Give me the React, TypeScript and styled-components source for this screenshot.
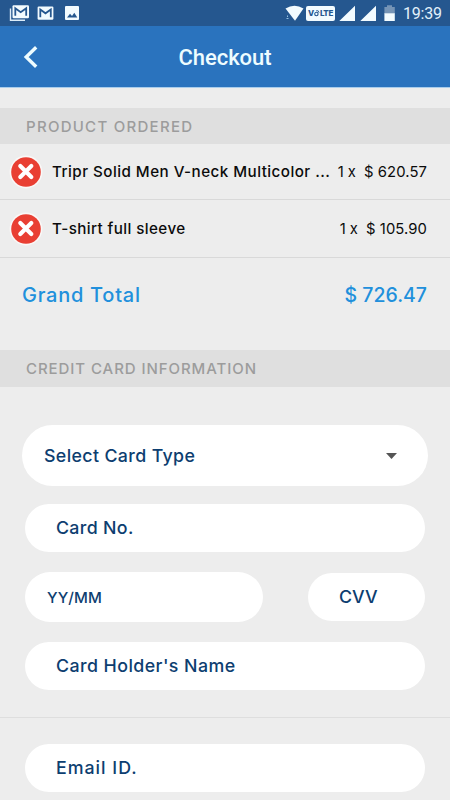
import React from 'react';
import styled, { createGlobalStyle } from 'styled-components';

const GlobalStyle = createGlobalStyle`
  * { box-sizing: border-box; }
  html, body { margin: 0; padding: 0; background: #ededed; }
  body { overflow: hidden; font-family: Inter, "Liberation Sans", sans-serif; }
`;

const Screen = styled.div`
  display: flex;
  flex-direction: column;
  width: 450px;
  height: 800px;
  overflow: hidden;
  background: #ededed;
`;

const StatusBar = styled.div`
  display: flex;
  flex: none;
  height: 26px;
  justify-content: space-between;
  background: #25578f;
`;

const Clock = styled.span`
  width: 55px;
  padding-left: 8px;
  font: 400 16px/28px Roboto, sans-serif;
  letter-spacing: -0.2px;
  color: #e2f1fb;
`;

const StatusGroup = styled.div`
  display: flex;
`;

const Header = styled.header`
  display: grid;
  flex: none;
  grid-template-columns: 60px 1fr 60px;
  height: 62px;
  background: #2a73be;
  border-bottom: 1px solid #a9cdec;
`;

const BackButton = styled.button`
  padding: 0;
  border: 0;
  background: none;
  display: flex;
`;

const Title = styled.h1`
  margin: 0;
  text-align: center;
  font: 500 22px/63px Roboto, sans-serif;
  letter-spacing: -0.05px;
  color: #eefcff;
`;

const SectionHeading = styled.h2<{ $gap: number; $height: number; $spacing: number }>`
  flex: none;
  height: ${(p) => p.$height}px;
  margin: ${(p) => p.$gap}px 0 0;
  padding-left: 26px;
  background: #dfdfdf;
  color: #9c9c9c;
  font-size: 15px;
  font-weight: 500;
  line-height: 38px;
  letter-spacing: ${(p) => p.$spacing}px;
`;

const ItemRow = styled.div<{ $height: number }>`
  display: flex;
  flex: none;
  align-items: center;
  height: ${(p) => p.$height}px;
  padding: 0 23px 0 9px;
  border-bottom: 1px solid #d9d9d9;
  color: #0b0b0b;
  font-size: 14.8px;
  white-space: pre;
`;

const RemoveButton = styled.button`
  display: flex;
  padding: 0;
  border: 0;
  background: none;
`;

const ItemName = styled.span<{ $spacing: number }>`
  flex: 1;
  margin-left: 9px;
  font-size: 15.2px;
  font-weight: 500;
  letter-spacing: ${(p) => p.$spacing}px;
`;

const Quantity = styled.span`
  margin-right: 8px;
`;

const Price = styled.span`
  letter-spacing: 0.1px;
`;

const TotalRow = styled.div`
  display: flex;
  flex: none;
  justify-content: space-between;
  height: 92px;
  padding: 18px 23px 0 22px;
  color: #2190dc;
  font-size: 19.5px;
  font-weight: 500;
  line-height: 39px;
`;

const TotalLabel = styled.span`
  font-size: 20px;
  letter-spacing: 0.74px;
`;

const Fields = styled.div`
  display: flex;
  flex-direction: column;
  flex: none;
  padding: 38px 25px 27px;
`;

const FieldPair = styled.div`
  display: flex;
  align-items: center;
  justify-content: space-between;
  margin: 20px 0;
`;

const Field = styled.div<{ $spacing: number }>`
  height: 48px;
  padding-left: 31px;
  border-radius: 24px;
  background: #fff;
  color: #0d3e70;
  font-size: 17.8px;
  font-weight: 500;
  line-height: 47px;
  letter-spacing: ${(p) => p.$spacing}px;
`;

const SelectField = styled(Field)`
  display: flex;
  align-items: center;
  justify-content: space-between;
  height: 61px;
  margin: 0 -3px 18px;
  padding: 0 31px 0 22px;
  border-radius: 31px;
`;

const DateField = styled(Field)`
  width: 238px;
  height: 50px;
  padding-left: 22px;
  border-radius: 25px;
  font-size: 15.2px;
  line-height: 51px;
`;

const CvvField = styled(Field)`
  width: 117px;
`;

const ContactFields = styled.div`
  border-top: 1px solid #dedede;
  padding: 26px 25px 8px;
`;

const Remove = () => (
  <RemoveButton aria-label="Remove item">
    <svg width="34" height="34" viewBox="0 0 34 34">
      <circle cx="17" cy="17" r="16.4" fill="#faf8f7" />
      <circle cx="17" cy="17" r="14.8" fill="#e93f33" />
      <path d="M11.3 11.1 22.3 22.1M22.3 11.1 11.3 22.1" stroke="#fff" strokeWidth="4.2" strokeLinecap="round" />
    </svg>
  </RemoveButton>
);

const NotificationIcons = () => (
  <svg width="90" height="26" viewBox="0 0 90 26" fill="none">
    <path d="M10.5 8.5V20.2H25" stroke="#dcecf8" strokeWidth="1.4" />
    <rect x="12.5" y="5.2" width="16.5" height="13" rx="1.2" fill="#f2fbff" />
    <path d="M15.3 15.8V8.2L20.7 12.2 26.2 8.2V15.8" stroke="#25578f" strokeWidth="1.8" />
    <rect x="37.6" y="6.5" width="15.8" height="13.2" rx="1.2" fill="#f2fbff" />
    <path d="M40.3 17.2V9.5L45.5 13.3 50.8 9.5V17.2" stroke="#25578f" strokeWidth="1.8" />
    <rect x="65" y="6" width="14" height="14" rx="1" fill="#f2fbff" />
    <path d="M67 17.6 70 13.7 72 16 74.3 12.8 77.3 17.6Z" fill="#25578f" />
  </svg>
);

const VolteBadge = styled.span`
  display: flex;
  align-items: center;
  justify-content: center;
  width: 29px;
  height: 14.5px;
  margin: 6px 3px 0 0;
  border-radius: 2px;
  background: #f2fbff;
  color: #25578f;
  font: 800 8px/14px Inter, sans-serif;
  letter-spacing: -0.35px;
`;

const WifiIcon = () => (
  <svg width="21" height="26" viewBox="285 0 21 26">
    <path d="M285.5 8.5Q294.5 2.8 303.5 8.5L295 20.8Z" fill="#f2fbff" />
    <path d="M287.5 15.5V17M286.5 18.5H288.5" stroke="#94bfdf" />
  </svg>
);

const VolteSwirl = () => (
  <svg width="6" height="10" viewBox="0 0 6 10" fill="none" stroke="#25578f">
    <circle cx="2.4" cy="6" r="1.7" strokeWidth="1.1" />
    <path d="M2.2 2.7Q4.8 2 5.1 4.7" strokeWidth="0.9" />
  </svg>
);

const SignalAndBattery = () => (
  <svg width="57" height="26" viewBox="338 0 57 26">
    <path d="M355 5.7V21H339.3ZM376 5.7V21H360.3Z" fill="#f2fbff" />
    <path d="M384.4 7H387V5.2H392V7H394.8V14H384.4Z" fill="#7594b6" />
    <path d="M384.4 13.3H394.8V21H384.4Z" fill="#f2fbff" />
  </svg>
);

export default function App() {
  return (
    <>
      <GlobalStyle />
      <Screen>
        <StatusBar>
          <NotificationIcons />
          <StatusGroup>
            <WifiIcon />
            <VolteBadge>V<VolteSwirl />LTE</VolteBadge>
            <SignalAndBattery />
            <Clock>19:39</Clock>
          </StatusGroup>
        </StatusBar>
        <Header>
          <BackButton aria-label="Back">
            <svg width="60" height="61" viewBox="0 26 60 61" fill="none">
              <path d="M36.2 47.3 26.2 57 36.2 66.7" stroke="#eefcff" strokeWidth="3.4" />
            </svg>
          </BackButton>
          <Title>Checkout</Title>
        </Header>
        <SectionHeading $gap={20} $height={36} $spacing={1.27}>PRODUCT ORDERED</SectionHeading>
        <ItemRow $height={56}>
          <Remove />
          <ItemName $spacing={0.46}>Tripr Solid Men V-neck Multicolor ...</ItemName>
          <Quantity>1 x</Quantity>
          <Price>$ 620.57</Price>
        </ItemRow>
        <ItemRow $height={58}>
          <Remove />
          <ItemName $spacing={0.4}>T-shirt full sleeve</ItemName>
          <Quantity>1 x</Quantity>
          <Price>$ 105.90</Price>
        </ItemRow>
        <TotalRow>
          <TotalLabel>Grand Total</TotalLabel>
          <span>$ 726.47</span>
        </TotalRow>
        <SectionHeading $gap={0} $height={37} $spacing={0.93}>CREDIT CARD INFORMATION</SectionHeading>
        <Fields>
          <SelectField $spacing={0.36}>
            Select Card Type
            <svg width="11" height="6" viewBox="0 0 11 6">
              <path d="M0 0H11L5.5 6Z" fill="#555" />
            </svg>
          </SelectField>
          <Field $spacing={0.33}>Card No.</Field>
          <FieldPair>
            <DateField $spacing={0.09}>YY/MM</DateField>
            <CvvField $spacing={0}>CVV</CvvField>
          </FieldPair>
          <Field $spacing={0.43}>Card Holder's Name</Field>
        </Fields>
        <ContactFields>
          <Field $spacing={1.0}>Email ID.</Field>
        </ContactFields>
      </Screen>
    </>
  );
}
